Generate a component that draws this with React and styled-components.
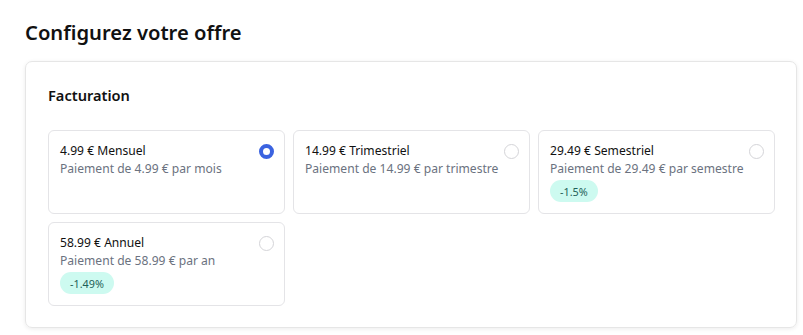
import React, {useState} from 'react'
import styled, {createGlobalStyle} from 'styled-components'

const GlobalStyle = createGlobalStyle`
  body {
    margin: 0;
    background: #ffffff;
    font-family: 'Noto Sans', 'Open Sans', sans-serif;
    color: #111111;
  }
`

const Page = styled.div`
  padding: 18px 6px 8px 25px;
`

const Title = styled.h1`
  margin: 0 0 15px 0;
  font-size: 20.2px;
  line-height: 28px;
  font-weight: 600;
  color: #111111;
`

const Panel = styled.section`
  border: 1px solid #e6e6e6;
  border-radius: 7px;
  box-shadow: 0 1px 4px rgba(0, 0, 0, 0.08);
  padding: 22px 21px 21px 22px;
`

const SectionTitle = styled.h2`
  margin: 0 0 24px 0;
  font-size: 14.6px;
  line-height: 22px;
  font-weight: 600;
`

const OptionGrid = styled.div`
  display: grid;
  grid-template-columns: repeat(3, 1fr);
  gap: 8px;
`

const OptionCard = styled.label`
  display: flex;
  justify-content: space-between;
  align-items: flex-start;
  border: 1px solid #e4e4e7;
  border-radius: 6px;
  padding: 11px 10px 11px 11px;
  min-height: 59px;
  cursor: pointer;
`

const OptionText = styled.div`
  flex: 1;
  min-width: 0;
  display: flex;
  flex-direction: column;
  align-items: flex-start;
  white-space: nowrap;
`

const OptionName = styled.div`
  font-size: 12.1px;
  line-height: 18px;
  color: #111111;
`

const OptionSub = styled.div`
  font-size: 12.1px;
  line-height: 18px;
  color: #6b7280;
`

const Badge = styled.span`
  margin-top: 2px;
  height: 22px;
  padding: 0 10px;
  display: inline-flex;
  align-items: center;
  border-radius: 11px;
  background: #cdfaf0;
  color: #1f5f58;
  font-size: 10.8px;
`

const Radio = styled.span`
  flex: none;
  width: 15px;
  height: 15px;
  margin-top: 2px;
  border-radius: 50%;
  box-sizing: border-box;
  border: ${p => p.checked ? '4px solid #3b63e0' : '1px solid #d4d4d8'};
  background: #ffffff;
`

const offers = [
  {id: 'm', price: '4.99', name: 'Mensuel', per: 'mois'},
  {id: 't', price: '14.99', name: 'Trimestriel', per: 'trimestre'},
  {id: 's', price: '29.49', name: 'Semestriel', per: 'semestre', discount: '-1.5%'},
  {id: 'a', price: '58.99', name: 'Annuel', per: 'an', discount: '-1.49%'},
]

export default function App() {
  const [selected, setSelected] = useState('m')

  return (
    <Page>
      <GlobalStyle />
      <Title>Configurez votre offre</Title>
      <Panel>
        <SectionTitle>Facturation</SectionTitle>
        <OptionGrid>
          {offers.map(o => (
            <OptionCard key={o.id} onClick={() => setSelected(o.id)}>
              <OptionText>
                <OptionName>{o.price} € {o.name}</OptionName>
                <OptionSub>Paiement de {o.price} € par {o.per}</OptionSub>
                {o.discount && <Badge>{o.discount}</Badge>}
              </OptionText>
              <Radio checked={selected === o.id} />
            </OptionCard>
          ))}
        </OptionGrid>
      </Panel>
    </Page>
  )
}
